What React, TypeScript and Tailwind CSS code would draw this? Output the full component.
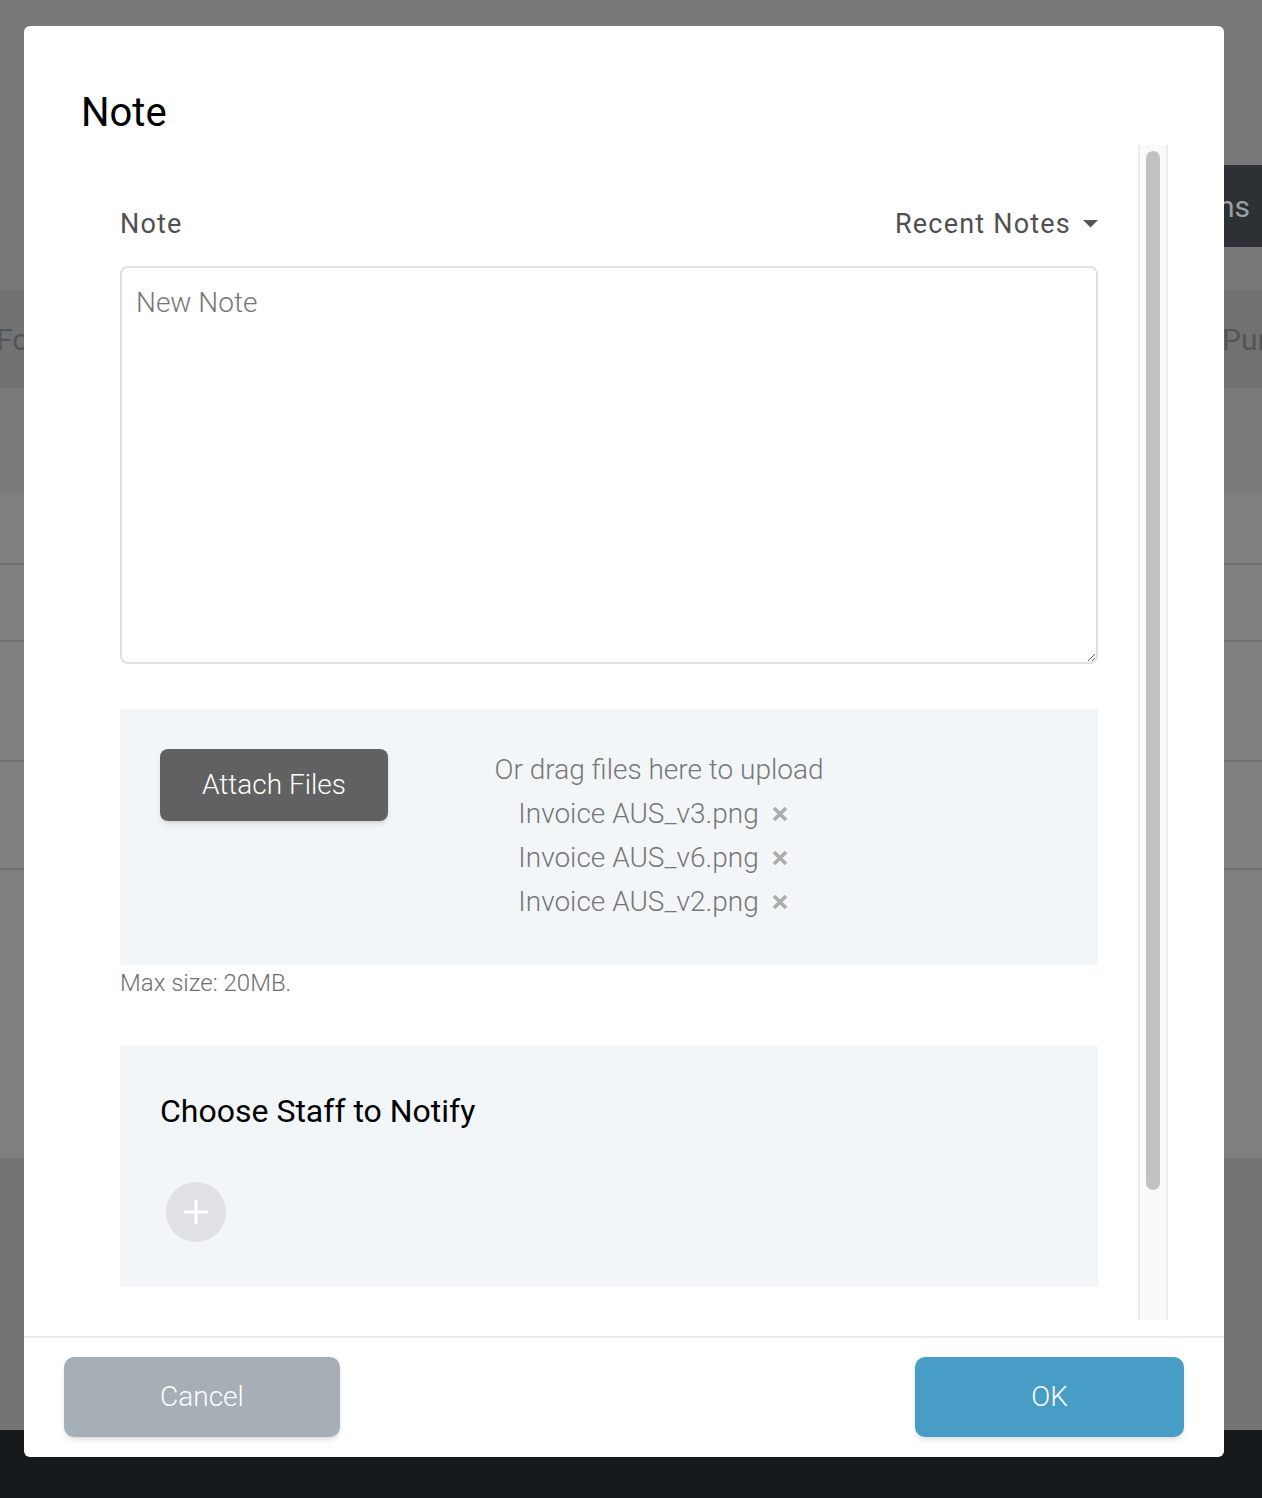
import React from "react"

const files = ["Invoice AUS_v3.png", "Invoice AUS_v6.png", "Invoice AUS_v2.png"]

function RemoveIcon() {
  return (
    <svg width="16" height="16" viewBox="0 0 16 16" className="shrink-0">
      <path d="M2 2 L14 14 M14 2 L2 14" stroke="#acacac" strokeWidth="3.5" />
    </svg>
  )
}

function Backdrop() {
  // dimmed page that sits behind the dialog
  return (
    <div className="flex flex-col w-full h-[1498px] bg-[#787878] text-[#4f565b]">
      <div className="h-[165px]" />
      <div className="h-[82px] flex justify-end">
        <div className="w-[300px] bg-[#2d3135] flex items-center justify-end pr-[12px] text-[30px] text-[#9aa0a4]">
          Actions
        </div>
      </div>
      <div className="h-[43px]" />
      <div className="h-[98px] bg-[#727272] flex items-center justify-between text-[30px]">
        <span className="-ml-[4px]">Fo</span>
        <span className="w-[40px] overflow-hidden whitespace-nowrap">Pur</span>
      </div>
      <div className="h-[104px] bg-[#7a7a7a]" />
      <div className="h-[73px] bg-[#7f7f7f] border-b-2 border-[#6e6e6e]" />
      <div className="h-[77px] bg-[#7f7f7f] border-b-2 border-[#6e6e6e]" />
      <div className="h-[120px] bg-[#7f7f7f] border-b-2 border-[#6e6e6e]" />
      <div className="h-[108px] bg-[#7f7f7f] border-b-2 border-[#6e6e6e]" />
      <div className="h-[288px] bg-[#7f7f7f]" />
      <div className="h-[272px] bg-[#747474]" />
      <div className="flex-1 bg-[#15191c]" />
    </div>
  )
}

export default function App() {
  return (
    <div className="relative w-[1262px] h-[1498px] overflow-hidden font-['Roboto',sans-serif]">
      <Backdrop />

      {/* Dialog */}
      <div className="absolute left-[24px] top-[26px] w-[1200px] h-[1431px] bg-white rounded-[6px] flex flex-col">
        <h1 className="pt-[63px] pl-[57px] text-[40px] leading-[48px] font-normal text-black">Note</h1>

        <div className="mt-[8px] ml-[56px] flex h-[1175px] overflow-hidden">
          <div className="w-[1058px] px-[40px] pt-[64px]">
            {/* Label row */}
            <div className="flex items-center justify-between h-[30px] text-[27px] tracking-[1.2px] text-[#505050]">
              <span>Note</span>
              <div className="flex items-center gap-[12px]">
                <span>Recent Notes</span>
                <svg width="15" height="8" viewBox="0 0 15 8">
                  <path d="M0 0 L15 0 L7.5 7.5 Z" fill="#555" />
                </svg>
              </div>
            </div>

            <textarea
              placeholder="New Note"
              className="mt-[27px] block w-[978px] h-[398px] border-2 border-[#e0e0e0] rounded-[8px] px-[14px] py-[18px] text-[28px] font-light leading-[34px] text-[#333] placeholder:text-[#777] outline-none resize-y"
            />

            {/* Drop zone */}
            <div className="mt-[45px] bg-[#f2f6f9] pt-[40px] pb-[41px] pl-[40px] flex items-start">
              <button className="w-[228px] h-[72px] bg-[#616161] rounded-[8px] text-white text-[28px] font-light shadow-md">
                Attach Files
              </button>
              <div className="ml-[40px] w-[462px] flex flex-col items-center text-[28px] font-light text-[#777] leading-[44px] -mt-[1px]">
                <span>Or drag files here to upload</span>
                {files.map((f) => (
                  <div key={f} className="flex items-center gap-[13px] pr-[12px]">
                    <span>{f}</span>
                    <RemoveIcon />
                  </div>
                ))}
              </div>
            </div>

            <p className="mt-[5px] text-[24px] leading-[26px] font-light text-[#707070]">Max size: 20MB.</p>

            {/* Staff */}
            <div className="mt-[50px] bg-[#f2f6f9] pt-[46px] pb-[45px] pl-[40px]">
              <h2 className="text-[32px] leading-[38px] font-normal text-black">Choose Staff to Notify</h2>
              <button className="mt-[52px] ml-[6px] w-[60px] h-[60px] rounded-full bg-[#dfe1e6] flex items-center justify-center">
                <svg width="28" height="28" viewBox="0 0 28 28">
                  <path d="M14 2 V26 M2 14 H26" stroke="white" strokeWidth="3" />
                </svg>
              </button>
            </div>
          </div>

          {/* Scrollbar */}
          <div className="w-[30px] h-full bg-[#fafafa] border-x-2 border-[#ececec] pt-[6px] px-[6px]">
            <div className="h-[1039px] bg-[#c1c1c1] rounded-full" />
          </div>
        </div>

        <div className="mt-[16px] h-[2px] bg-[#e6eaee]" />

        <div className="flex justify-between px-[40px] pt-[19px]">
          <button className="w-[276px] h-[80px] bg-[#a6afb5] rounded-[10px] text-white text-[28px] font-light shadow-md">
            Cancel
          </button>
          <button className="w-[269px] h-[80px] bg-[#479dc5] rounded-[10px] text-white text-[28px] font-light shadow-md">
            OK
          </button>
        </div>
      </div>
    </div>
  )
}
